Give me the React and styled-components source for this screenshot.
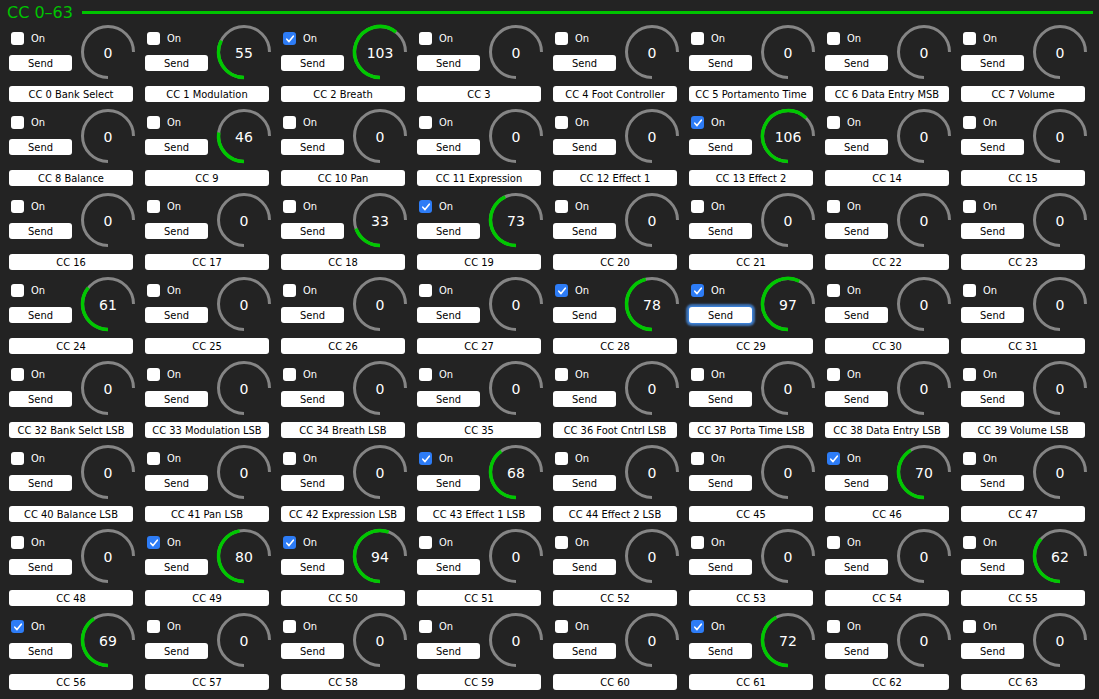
import * as React from 'react';
import styled, { createGlobalStyle } from 'styled-components';

const GlobalStyle = createGlobalStyle`
  html, body {
    margin: 0;
    background: #232323;
  }
  body {
    font-family: "DejaVu Sans Condensed", "DejaVu Sans", sans-serif;
  }
`;

const Page = styled.div`
  width: 1099px;
  height: 699px;
  background: #232323;
  padding: 0 6px 0 9px;
  box-sizing: border-box;
  overflow: hidden;
`;

const Header = styled.div`
  display: flex;
  align-items: center;
  height: 25px;
  margin-left: -2px;
  gap: 9px;
`;

const Title = styled.span`
  color: #00c400;
  font-family: "DejaVu Sans", sans-serif;
  font-size: 16px;
  line-height: 16px;
  white-space: nowrap;
`;

const Rule = styled.div`
  flex: 1;
  height: 3px;
  background: #00c400;
`;

const Grid = styled.div`
  display: grid;
  grid-template-columns: repeat(8, 124px);
  column-gap: 12px;
  row-gap: 7px;
`;

const Cell = styled.div`
  display: flex;
  flex-direction: column;
  width: 124px;
`;

const Top = styled.div`
  display: flex;
  height: 56px;
`;

const Controls = styled.div`
  display: flex;
  flex-direction: column;
  width: 63px;
  padding-top: 7px;
  flex: none;
`;

const CheckRow = styled.label`
  display: flex;
  align-items: center;
  gap: 7px;
  height: 13px;
  margin-left: 2px;
  color: #fff;
  font-size: 11px;
`;

const Box = styled.span`
  display: flex;
  align-items: center;
  justify-content: center;
  width: 13px;
  height: 13px;
  border-radius: 3px;
  background: ${p => (p.$on ? '#2d7cf6' : '#ffffff')};
`;

const SendButton = styled.button`
  margin-top: 10px;
  width: 63px;
  height: 16px;
  padding: 1px 0 0;
  border: 0;
  border-radius: 3px;
  background: #fff;
  color: #000;
  font-family: inherit;
  font-size: 11px;
  line-height: 15px;
  box-shadow: ${p => (p.$focus ? '0 0 0 1px #3a7fd5, 0 0 2px 3px rgba(70,140,230,0.75)' : 'none')};
`;

const Knob = styled.svg`
  margin-left: 9px;
  width: 54px;
  height: 54px;
  flex: none;
  overflow: visible;
`;

const Label = styled.div`
  margin-top: 5px;
  height: 16px;
  box-sizing: border-box;
  padding-top: 1px;
  border-radius: 3px;
  background: #fff;
  color: #000;
  text-align: center;
  font-size: 11px;
  line-height: 15px;
  white-space: nowrap;
`;

const names = {
  0: 'Bank Select', 1: 'Modulation', 2: 'Breath', 4: 'Foot Controller',
  5: 'Portamento Time', 6: 'Data Entry MSB', 7: 'Volume', 8: 'Balance',
  10: 'Pan', 11: 'Expression', 12: 'Effect 1', 13: 'Effect 2',
  32: 'Bank Selct LSB', 33: 'Modulation LSB', 34: 'Breath LSB',
  36: 'Foot Cntrl LSB', 37: 'Porta Time LSB', 38: 'Data Entry LSB',
  39: 'Volume LSB', 40: 'Balance LSB', 41: 'Pan LSB', 42: 'Expression LSB',
  43: 'Effect 1 LSB', 44: 'Effect 2 LSB',
};

const values = {
  1: 55, 2: 103, 9: 46, 13: 106, 18: 33, 19: 73, 24: 61, 28: 78, 29: 97,
  43: 68, 46: 70, 49: 80, 50: 94, 55: 62, 56: 69, 61: 72,
};

const checked = [2, 13, 19, 28, 29, 43, 46, 49, 50, 56, 61];

const point = (deg, r) => {
  const a = (deg * Math.PI) / 180;
  return [27 + r * Math.sin(a), 27 - r * Math.cos(a)];
};

const arc = (from, to, r) => {
  const [x1, y1] = point(from, r);
  const [x2, y2] = point(to, r);
  const large = to - from > 180 ? 1 : 0;
  return `M ${x1} ${y1} A ${r} ${r} 0 ${large} 1 ${x2} ${y2}`;
};

const Dial = ({ value }) => {
  const r = 25.5;
  const end = 180 + (value / 127) * 270;
  return (
    <Knob viewBox="0 0 54 54">
      <path d={arc(180, 450, r)} fill="none" stroke="#858585" strokeWidth="3" />
      {value > 0 && (
        <path d={arc(180, end, r)} fill="none" stroke="#00c800" strokeWidth="3.5" />
      )}
      <text
        x="27"
        y="28"
        textAnchor="middle"
        dominantBaseline="central"
        fill="#fff"
        fontSize="14"
        fontFamily='"DejaVu Sans", sans-serif'
      >
        {value}
      </text>
    </Knob>
  );
};

const Check = () => (
  <svg width="10" height="10" viewBox="0 0 10 10">
    <path d="M1.8 5.2 L4 7.6 L8.3 2.2" fill="none" stroke="#fff" strokeWidth="1.6" strokeLinecap="round" strokeLinejoin="round" />
  </svg>
);

const Controller = ({ cc }) => {
  const on = checked.includes(cc);
  const value = values[cc] || 0;
  return (
    <Cell>
      <Top>
        <Controls>
          <CheckRow>
            <Box $on={on}>{on && <Check />}</Box>
            On
          </CheckRow>
          <SendButton $focus={cc === 29}>Send</SendButton>
        </Controls>
        <Dial value={value} />
      </Top>
      <Label>{names[cc] ? `CC ${cc} ${names[cc]}` : `CC ${cc}`}</Label>
    </Cell>
  );
};

export default function App() {
  return (
    <Page>
      <GlobalStyle />
      <Header>
        <Title>CC 0–63</Title>
        <Rule />
      </Header>
      <Grid>
        {Array.from({ length: 64 }, (_, i) => (
          <Controller key={i} cc={i} />
        ))}
      </Grid>
    </Page>
  );
}
